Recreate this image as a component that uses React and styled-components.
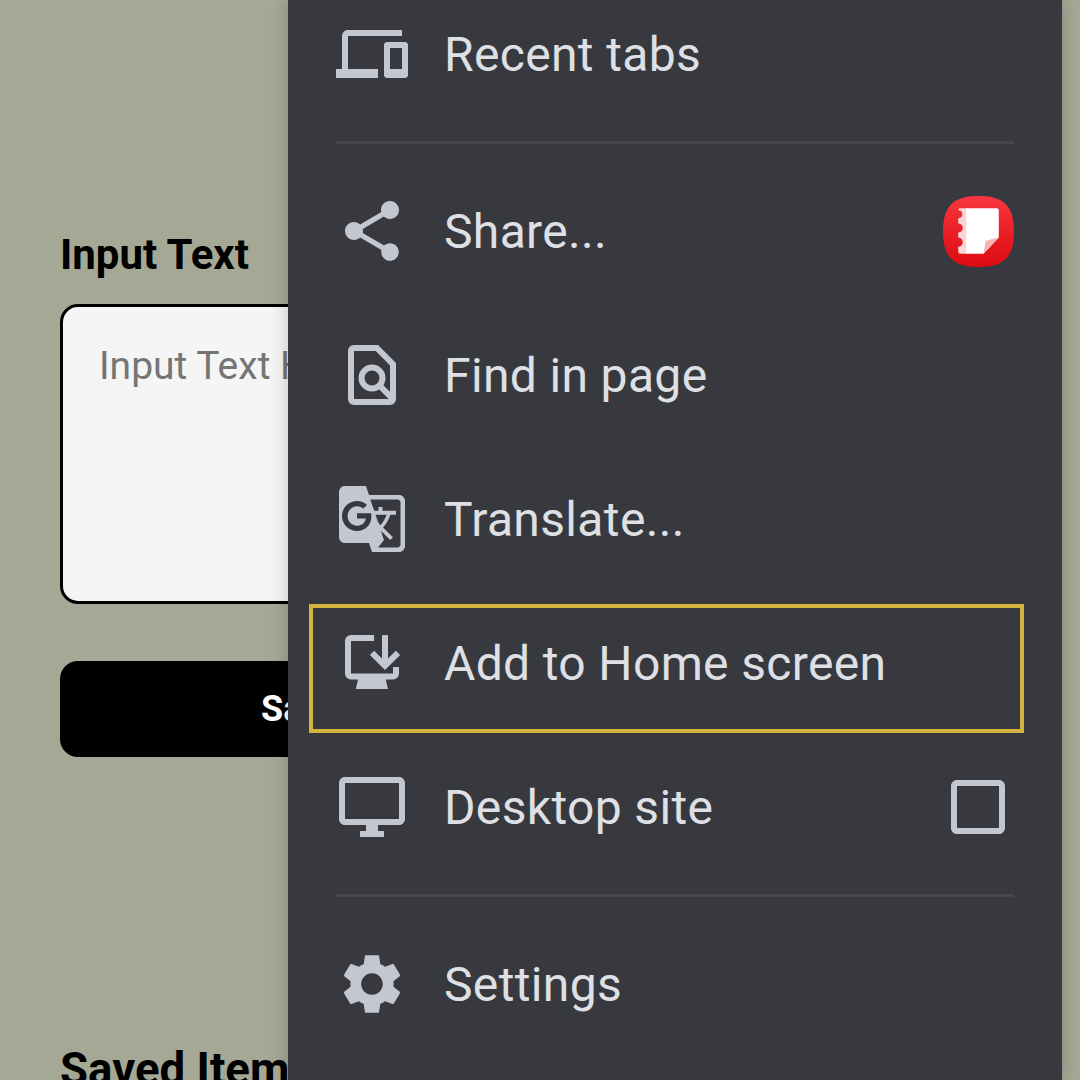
import React from 'react';
import styled, { createGlobalStyle } from 'styled-components';
import {
  MdDevices,
  MdShare,
  MdGTranslate,
  MdOutlineDesktopWindows,
  MdSettings,
  MdCheckBoxOutlineBlank,
} from 'react-icons/md';

const GlobalStyle = createGlobalStyle`
  html, body {
    margin: 0;
    padding: 0;
    height: 1080px;
    overflow: hidden;
    background: #a5a895;
    font-family: Roboto, "Liberation Sans", sans-serif;
  }
`;

const FindInPageIcon = () => (
  <svg width="72" height="72" viewBox="0 0 24 24" fill="none" stroke="currentColor" strokeWidth="2">
    <path d="M5 4a1 1 0 0 1 1-1h7.6L19 8.4V20a1 1 0 0 1-1 1H6a1 1 0 0 1-1-1z" />
    <circle cx="12" cy="13" r="3.5" />
    <path d="M14.6 15.6l4 4" />
  </svg>
);

const AddHomeIcon = () => (
  <svg width="72" height="72" viewBox="0 0 24 24" fill="none" stroke="currentColor" strokeWidth="2">
    <path d="M12.7 3.7H5a1 1 0 0 0-1 1V15.5a1 1 0 0 0 1 1H19a1 1 0 0 0 1-1V13.3" />
    <path d="M16.33 2.7V12.4" />
    <path d="M12 8.6l4.33 4.3 4.33-4.3" />
    <path d="M7.6 16.5H16.4L17.3 20.7H6.6z" fill="currentColor" stroke="none" />
  </svg>
);

const NotesAppIcon = () => (
  <svg width="71" height="71" viewBox="0 0 70 70">
    <defs>
      <linearGradient id="notesRed" x1="0" y1="0" x2="0" y2="1">
        <stop offset="0" stopColor="#f8363f" />
        <stop offset="1" stopColor="#dd0a10" />
      </linearGradient>
    </defs>
    <path d="M35 0C60 0 70 10 70 35C70 60 60 70 35 70C10 70 0 60 0 35C0 10 10 0 35 0z" fill="url(#notesRed)" />
    <path d="M17 12H24V57H17a2 2 0 0 1-2-2V50a4 4 0 0 0 0-9V36a4 4 0 0 0 0-9V22a4 4 0 0 0 0-8a2 2 0 0 1 2-2z" fill="#fbd4d6" />
    <path d="M23 12H53a2 2 0 0 1 2 2V41L40 57H23z" fill="#ffffff" />
    <path d="M55 41L40 57L42 44z" fill="#f6b3b6" />
  </svg>
);

const Page = styled.div`
  position: relative;
  height: 1080px;
  overflow: hidden;
  background: #a5a895;
`;

const Form = styled.main`
  display: flex;
  flex-direction: column;
  padding: 230px 60px 0;
`;

const FieldLabel = styled.label`
  font-size: 42px;
  line-height: 50px;
  font-weight: 700;
  color: #000;
`;

const TextInput = styled.textarea`
  box-sizing: border-box;
  display: block;
  width: 960px;
  height: 300px;
  margin-top: 24px;
  padding: 36px 36px;
  border: 3px solid #000;
  border-radius: 18px;
  background: #f5f5f5;
  font: 400 39px/1.2 Roboto, sans-serif;
  resize: none;
  outline: none;

  &::placeholder {
    color: #757575;
    opacity: 1;
  }
`;

const SaveButton = styled.button`
  width: 960px;
  height: 96px;
  margin-top: 57px;
  padding: 0 0 0 201px;
  border: 0;
  border-radius: 18px;
  background: #000;
  color: #fff;
  font: 700 36px Roboto, sans-serif;
  text-align: left;
`;

const SavedHeading = styled.h2`
  margin: 288px 0 0;
  font-size: 45.6px;
  line-height: 50px;
  font-weight: 700;
  color: #000;
`;

const Menu = styled.nav`
  position: absolute;
  top: 0;
  left: 288px;
  width: 774px;
  height: 1080px;
  overflow: hidden;
  background: #38393e;
  box-shadow: 0 0 18px rgba(0, 0, 0, 0.2);
`;

const MenuList = styled.div`
  display: flex;
  flex-direction: column;
  margin-top: -18px;
`;

const MenuRow = styled.div`
  position: relative;
  display: flex;
  align-items: center;
  gap: 36px;
  height: 144px;
  padding: 0 48px;
  color: #dfe0e5;

  ${({ $highlight }) =>
    $highlight &&
    `
    &::after {
      content: '';
      position: absolute;
      top: 13px;
      right: 38px;
      bottom: 2px;
      left: 21px;
      border: 4px solid #d2b43f;
    }
  `}
`;

const RowIcon = styled.span`
  display: flex;
  flex: none;
  width: 72px;
  height: 72px;
  color: #c4c7d1;

  svg {
    display: block;
  }
`;

const RowLabel = styled.span`
  margin-top: 2px;
  font-size: 48px;
  line-height: 54px;
  font-weight: 400;
  letter-spacing: 0.35px;
`;

const Trailing = styled.span`
  display: flex;
  align-items: center;
  justify-content: center;
  margin-left: auto;
  width: 72px;
  height: 72px;
  color: #c4c7d1;
`;

const Divider = styled.hr`
  height: 3px;
  margin: 15px 48px;
  border: 0;
  background: #45474c;
`;

const App = () => (
  <Page>
    <GlobalStyle />
    <Form>
      <FieldLabel>Input Text</FieldLabel>
      <TextInput placeholder="Input Text Here" />
      <SaveButton>Save</SaveButton>
      <SavedHeading>Saved Items</SavedHeading>
    </Form>
    <Menu>
      <MenuList>
        <MenuRow>
          <RowIcon><MdDevices size={72} /></RowIcon>
          <RowLabel>Recent tabs</RowLabel>
        </MenuRow>
        <Divider />
        <MenuRow>
          <RowIcon><MdShare size={72} /></RowIcon>
          <RowLabel>Share...</RowLabel>
          <Trailing><NotesAppIcon /></Trailing>
        </MenuRow>
        <MenuRow>
          <RowIcon><FindInPageIcon /></RowIcon>
          <RowLabel>Find in page</RowLabel>
        </MenuRow>
        <MenuRow>
          <RowIcon><MdGTranslate size={72} /></RowIcon>
          <RowLabel>Translate...</RowLabel>
        </MenuRow>
        <MenuRow $highlight>
          <RowIcon><AddHomeIcon /></RowIcon>
          <RowLabel>Add to Home screen</RowLabel>
        </MenuRow>
        <MenuRow>
          <RowIcon><MdOutlineDesktopWindows size={72} /></RowIcon>
          <RowLabel>Desktop site</RowLabel>
          <Trailing><MdCheckBoxOutlineBlank size={72} /></Trailing>
        </MenuRow>
        <Divider />
        <MenuRow>
          <RowIcon><MdSettings size={72} /></RowIcon>
          <RowLabel>Settings</RowLabel>
        </MenuRow>
      </MenuList>
    </Menu>
  </Page>
);

export default App;
